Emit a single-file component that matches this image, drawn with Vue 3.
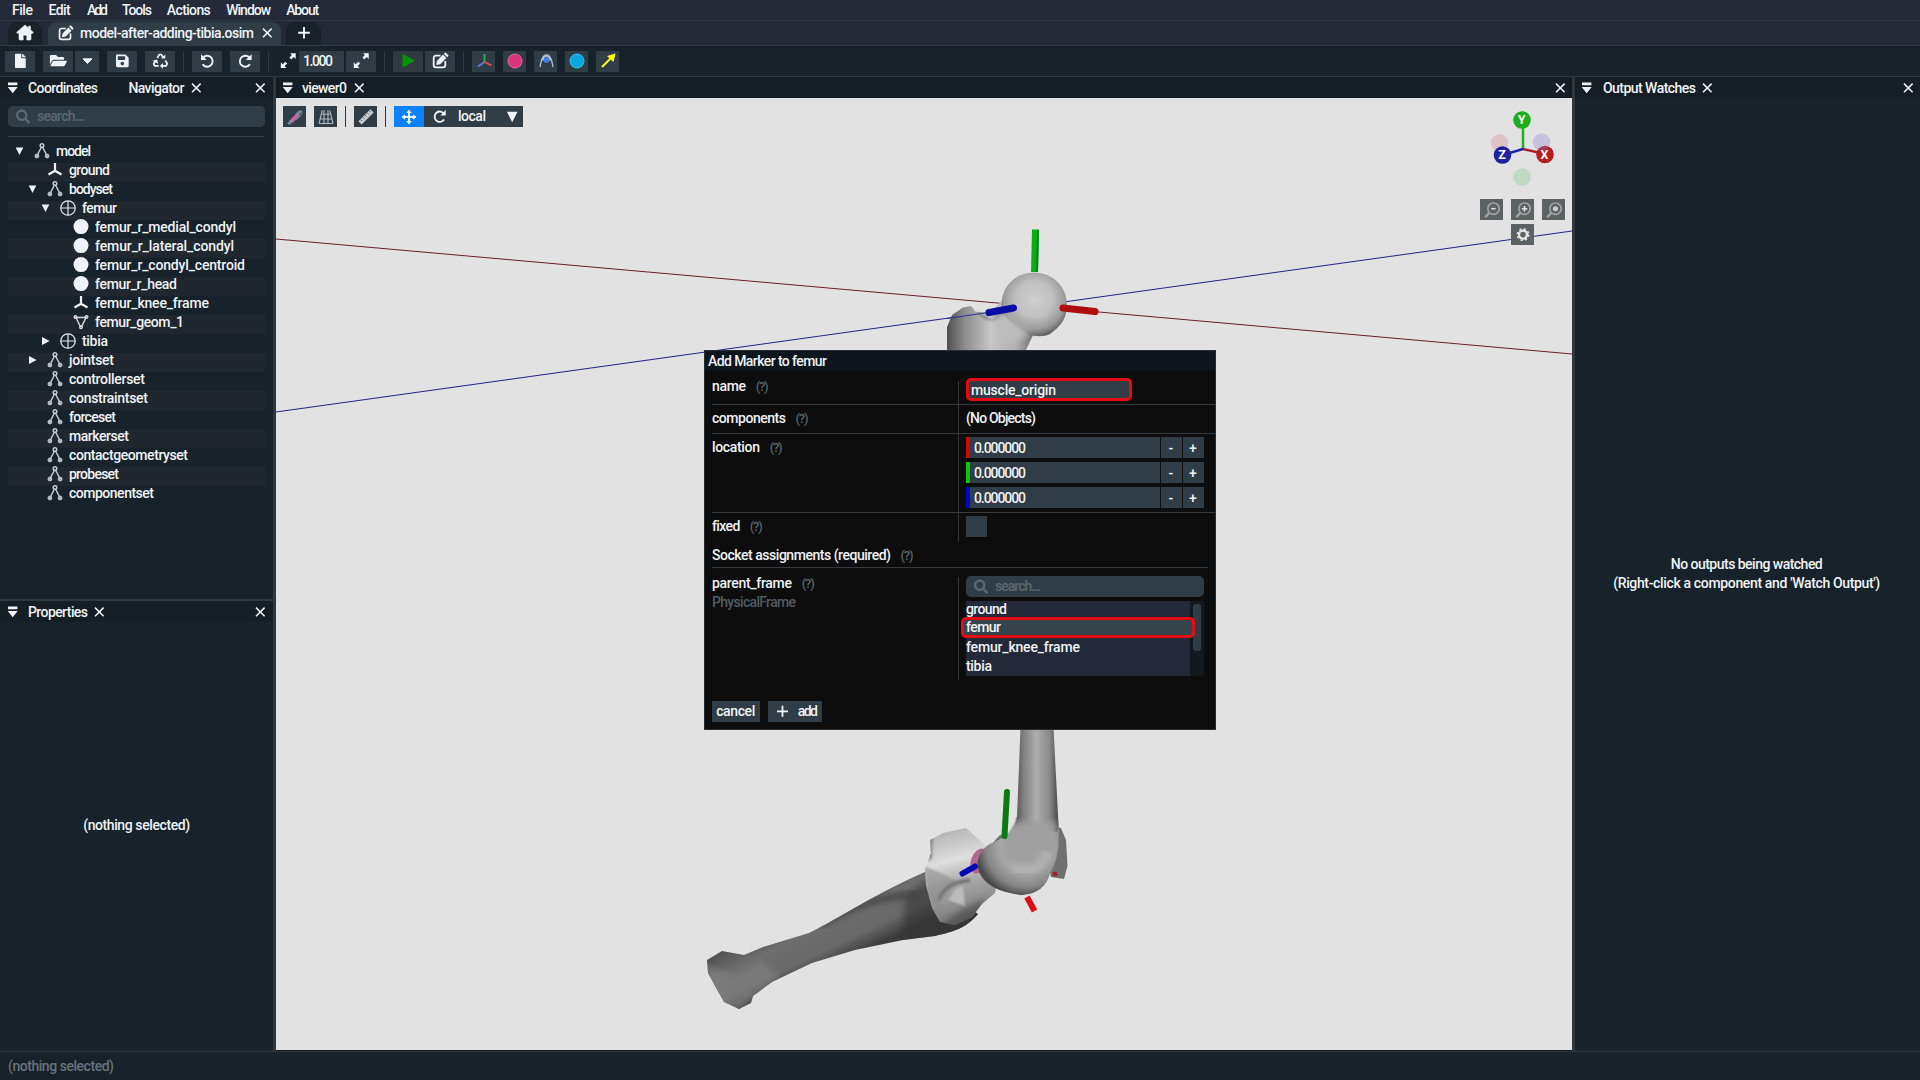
<script setup>
import { h } from 'vue'

// Spreads a label's letters so that it takes exactly the given width.
const vFit = {
  mounted(el, { value }) {
    const range = document.createRange()
    range.selectNodeContents(el)
    const natural = range.getBoundingClientRect().width
    el.style.letterSpacing = (value - natural) / Math.max(1, el.textContent.length - 1) + 'px'
  },
}

const icons = {
  house: '<path d="M9 1 0.6 8.4 1.9 9.6H3V15a1 1 0 0 0 1 1H7.2V11.2h3.6V16H14a1 1 0 0 0 1-1V9.600h1.100L17.400 8.400 14.500 5.800V2.200h-2v1.900Z" stroke="currentColor" stroke-width=".6" stroke-linejoin="round"/>',
  file: '<path transform="translate(4 1.700) scale(.028)" d="M224 136V0H24C10.700 0 0 10.700 0 24v464c0 13.300 10.700 24 24 24h336c13.300 0 24-10.700 24-24V160H248c-13.200 0-24-10.800-24-24zm160-14.100v6.100H256V0h6.100c6.400 0 12.500 2.500 17 7l97.900 98c4.500 4.500 7 10.600 7 16.900z"/>',
  folder: '<path transform="translate(.9 1.100) scale(.0295)" d="M572.694 292.093L500.270 416.248A63.997 63.997 0 0 1 444.989 448H45.025c-18.523 0-30.064-20.093-20.731-36.093l72.424-124.155A64 64 0 0 1 152 256h399.964c18.523 0 30.064 20.093 20.730 36.093zM152 224h328v-48c0-26.510-21.490-48-48-48H272l-64-64H48C21.490 64 0 85.490 0 112v278.046l69.077-118.418C86.214 242.250 117.989 224 152 224z"/>',
  caret: '<path d="M5 6.800h9L9.500 11.500Z" stroke="currentColor" stroke-linejoin="round"/>',
  save: '<path transform="translate(3 1.600) scale(.0283)" fill-rule="evenodd" d="M433.941 129.941l-83.882-83.882A48 48 0 0 0 316.118 32H48C21.490 32 0 53.490 0 80v352c0 26.510 21.490 48 48 48h352c26.510 0 48-21.490 48-48V163.882a48 48 0 0 0-14.059-33.941zM224 416c-35.346 0-64-28.654-64-64 0-35.346 28.654-64 64-64s64 28.654 64 64c0 35.346-28.654 64-64 64zm96-304.520V212c0 6.627-5.373 12-12 12H76c-6.627 0-12-5.373-12-12V108c0-6.627 5.373-12 12-12h228.520c3.183 0 6.235 1.264 8.485 3.515l3.480 3.480A11.996 11.996 0 0 1 320 111.480z"/>',
  recycle: '<g fill="none" stroke="currentColor" stroke-width="1.700"><path d="M6.300 6 8.300 2.500h2l1.900 3"/><path d="m14.300 8.300 1.900 3.300-1.100 2.300h-4"/><path d="M7.700 13.900H3.700l-1-2.100L4.500 8.800"/></g><path d="M10.100 6.500h4.200V2.500ZM12 10.900v5.900L8.900 13.900ZM1.500 8.700l4.600-1.200 1 4.200Z"/>',
  undo: '<path d="M4.500 6.300A5.500 5.500 0 1 1 4.600 12.300" fill="none" stroke="currentColor" stroke-width="1.900"/><path d="M3 2.200v5.700h5.700Z"/>',
  redo: '<path d="M14 6.300A5.500 5.500 0 1 0 13.900 12.300" fill="none" stroke="currentColor" stroke-width="1.900"/><path d="M15.600 2.200v5.700H9.900Z"/>',
  expand: '<path d="M11 1.200h5.700v5.700l-1.900-1.900-2.500 2.500-1.900-1.900L12.900 3.100ZM7.500 16H1.800v-5.700l1.900 1.900 2.500-2.500 1.900 1.900-2.500 2.500Z"/>',
  play: '<path fill="#069306" d="M4 2.500v12.500L15 8.700Z" stroke="#069306" stroke-linejoin="round"/>',
  edit: '<path d="M9.500 3.700H4.700a2 2 0 0 0-2 2v7.600a2 2 0 0 0 2 2h7.600a2 2 0 0 0 2-2V9" fill="none" stroke="currentColor" stroke-width="1.800"/><path d="m12 2.600 3.400 3.400-6.200 6.200-4 .700.700-4Zm.8-.8.900-.9a1 1 0 0 1 1.400 0l2 2a1 1 0 0 1 0 1.400l-.9.900Z"/>',
  frame: '<g fill="none" stroke-width="1.900"><path d="M9.500 2v8" stroke="#39a45a"/><path d="m9.500 10-6.500 4.500" stroke="#4b86d8"/><path d="m9.500 10 7 3.500" stroke="#e14a4a"/></g>',
  pink: '<circle cx="9" cy="9" r="7" fill="#d8347c" stroke="#e06a9a"/>',
  cyan: '<circle cx="9" cy="9" r="7" fill="#08a8dc" stroke="#2fc4ea"/>',
  joint: '<circle cx="9.500" cy="7.800" r="3.300" fill="#3f7be0"/><path d="M6 8.500C6 2.500 13 2.500 13 8.500M3 15c1-3 .8-12 6.500-12S15 12 16 15" fill="none" stroke="#b5bfc8" stroke-width="1.300"/>',
  arrow: '<path d="m3 15 9-9" stroke="#ffff00" stroke-width="2"/><path fill="#ffff00" d="M16.500 1.500 14.500 10 8 4Z"/>',
  close: '<path d="m5 4.600 8.600 8.600m0-8.600L5 13.200" stroke="currentColor" stroke-width="1.500"/>',
  plus: '<path d="M9 3v11.600M3.200 8.800h11.600" stroke="currentColor" stroke-width="1.900"/>',
  menu: '<path d="M4 3.500h9.400v2.800H4ZM3.700 8h10l-5 6.200Z"/>',
  search: '<path transform="translate(2 1.600) scale(.0275)" fill-rule="evenodd" d="M505 442.700L405.300 343c-4.500-4.500-10.600-7-17-7H372c27.600-35.300 44-79.700 44-128C416 93.100 322.900 0 208 0S0 93.100 0 208s93.100 208 208 208c48.300 0 92.700-16.400 128-44v16.300c0 6.400 2.500 12.500 7 17l99.700 99.700c9.400 9.400 24.600 9.400 33.900 0l28.300-28.300c9.400-9.400 9.400-24.600.1-34zM208 336c-70.700 0-128-57.200-128-128 0-70.700 57.200-128 128-128 70.700 0 128 57.200 128 128 0 70.700-57.200 128-128 128z"/>',
  down: '<path d="M4.700 5.500h7.600l-3.800 7.500Z"/>',
  right: '<path d="M5 5v8l7.600-4Z"/>',
  set: '<g fill="none" stroke="#c3cbd2" stroke-width="1.500"><path d="M8.500 5 4.300 13M9.500 5l4.200 8"/><circle cx="9" cy="3.500" r="1.800"/></g><g fill="#aeb7be" stroke="#c3cbd2"><circle cx="3.900" cy="14" r="1.900"/><circle cx="14.100" cy="14" r="1.900"/></g>',
  axes: '<path d="M9 2v8M9 9.700 2.500 13.500M9 9.700l6.500 3.800" fill="none" stroke="currentColor" stroke-width="2.200"/>',
  body: '<path d="M9 1.800v14.400M1.800 9h14.400" stroke="#dfe5ea" stroke-width="1.200"/><circle cx="9" cy="9" r="7.200" fill="none" stroke="#dfe5ea" stroke-width="1.300"/>',
  marker: '<circle cx="9" cy="8.600" r="7.500"/>',
  mesh: '<g fill="none" stroke="#d5dbe0" stroke-width="1.400"><path d="M4 4.500h10L9.700 13.500H8.300Z"/><circle cx="3.500" cy="4" r="1.300"/><circle cx="14.500" cy="4" r="1.300"/><circle cx="9" cy="14.300" r="1.300"/></g>',
  muscle: '<g fill="none" stroke-linecap="round"><path d="m6.300 12.500 5-5" stroke="#c462a4" stroke-width="4"/><path d="m2.500 15.500 3-2.500M11.500 6.500l3-3" stroke="#8c9aa6" stroke-width="1.800"/><path d="M4 12.500c-2 2-1 4.500 1.500 3.200M10.500 11.500 14.500 7.500c2-2 2.500-4.500.3-4.800S11.500 4.500 10 6" stroke="#6e8296" stroke-width="1.100"/></g>',
  grid: '<path d="M7 2v13.500M11 2v13.500M3.600 11h10.800M5 6.300h8M2 15.500h14M5.200 2.500 2 15.500M12.800 2.500 16 15.500" fill="none" stroke="#aeb7be" stroke-width="1.100"/>',
  ruler: '<path d="m3 14.800 12-12" stroke="#c9ced2" stroke-width="4.600"/><path d="m3.600 11.500 1.500 1.500M5.800 9.300l1.500 1.500M8 7.100l1.500 1.500M10.200 4.900l1.500 1.500M12.400 2.700l1.500 1.500" stroke="#4d5a64" stroke-width="1"/>',
  move: '<path d="M9 1.500v15M1.500 9h15" stroke="currentColor" stroke-width="2.200"/><path d="m9 .8 3.200 3.700H5.800ZM9 17.200l3.200-3.700H5.800ZM.8 9l3.700-3.200v6.400ZM17.200 9l-3.700-3.200v6.400Z"/>',
  tri: '<path d="M3.900 3.800h10.600L9.200 14.200Z"/>',
  zoomOut: '<g fill="none" stroke="#a0a4a6" stroke-width="1.700"><circle cx="10.500" cy="7.700" r="5.700"/><path d="m6.300 11.900-4 4.200" stroke-width="2.300"/></g><path d="M8.300 7.700h4.400" stroke="#e2e2e2" stroke-width="1.500"/>',
  zoomIn: '<g fill="none" stroke="#a0a4a6" stroke-width="1.700"><circle cx="10.500" cy="7.700" r="5.700"/><path d="m6.300 11.900-4 4.200" stroke-width="2.300"/></g><path d="M7.700 7.700h5.600M10.500 4.900v5.600" stroke="#e2e2e2" stroke-width="1.600"/>',
  zoomFit: '<g fill="none" stroke="#a0a4a6" stroke-width="1.700"><circle cx="10.500" cy="7.700" r="5.700"/><path d="m6.300 11.900-4 4.200" stroke-width="2.300"/></g><path fill="#c6c8c9" d="m10.500 4.900 2.500 1.400v2.900l-2.500 1.400L8 9.200V6.300Z"/>',
  gear: '<circle cx="9" cy="8.600" r="4" fill="none" stroke="#e6e6e6" stroke-width="2.300"/><circle cx="9" cy="8.600" r="5.600" fill="none" stroke="#e6e6e6" stroke-width="1.700" stroke-dasharray="2.200 2.198"/>',
}

const Icon = (p) =>
  h('svg', {
    viewBox: '0 0 18 18', width: p.s || 18, height: p.s || 18,
    fill: 'currentColor', style: 'display:block;flex:none', innerHTML: icons[p.n],
  })
Icon.props = ['n', 's']

const menus = [['File', 21], ['Edit', 22], ['Add', 21], ['Tools', 30], ['Actions', 44], ['Window', 45], ['About', 33]]

const tree = [
  [0, 'set', 'model', 35, 'down'], [1, 'axes', 'ground', 41], [1, 'set', 'bodyset', 44, 'down'],
  [2, 'body', 'femur', 35, 'down'], [3, 'marker', 'femur_r_medial_condyl', 141],
  [3, 'marker', 'femur_r_lateral_condyl', 139], [3, 'marker', 'femur_r_condyl_centroid', 150],
  [3, 'marker', 'femur_r_head', 82], [3, 'axes', 'femur_knee_frame', 114], [3, 'mesh', 'femur_geom_1', 89],
  [2, 'body', 'tibia', 26, 'right'], [1, 'set', 'jointset', 45, 'right'], [1, 'set', 'controllerset', 76],
  [1, 'set', 'constraintset', 79], [1, 'set', 'forceset', 47], [1, 'set', 'markerset', 60],
  [1, 'set', 'contactgeometryset', 119], [1, 'set', 'probeset', 50], [1, 'set', 'componentset', 85],
]
const axisColors = ['red', 'green', 'blue']
const frames = [['ground', 41], ['femur', 35], ['femur_knee_frame', 114], ['tibia', 26]]
</script>

<template>
  <div class="app">
    <nav class="menubar"><span v-for="m in menus" :key="m[0]" v-fit="m[1]">{{ m[0] }}</span></nav>

    <div class="tabs">
      <div class="tab home"><Icon n="house" /></div>
      <div class="tab file">
        <Icon n="edit" s="17" /><span v-fit="174">model-after-adding-tibia.osim</span><Icon n="close" />
      </div>
      <div class="tab add"><Icon n="plus" /></div>
    </div>

    <div class="toolbar">
      <button class="b w30"><Icon n="file" /></button>
      <button class="b w30 g8"><Icon n="folder" /></button>
      <button class="b w24 g2"><Icon n="caret" /></button>
      <button class="b w30 g8"><Icon n="save" /></button>
      <button class="b w30 g8"><Icon n="recycle" /></button>
      <i class="sep"></i>
      <button class="b w30"><Icon n="undo" /></button>
      <button class="b w30 g8"><Icon n="redo" /></button>
      <i class="sep"></i>
      <span class="scale"><Icon n="expand" /></span>
      <span class="field"><span v-fit="30">1.000</span></span>
      <button class="b w30 g2"><Icon n="expand" /></button>
      <i class="sep"></i>
      <button class="b w30 run"><Icon n="play" /></button>
      <button class="b w30 g2"><Icon n="edit" /></button>
      <i class="sep"></i>
      <button class="b w23"><Icon n="frame" /></button>
      <button class="b w23 g8"><Icon n="pink" /></button>
      <button class="b w23 g8"><Icon n="joint" /></button>
      <button class="b w23 g8"><Icon n="cyan" /></button>
      <button class="b w23 g8"><Icon n="arrow" /></button>
    </div>

    <main class="work">
      <aside class="left">
        <section class="navigator">
          <header class="head">
            <Icon n="menu" /><span class="t1" v-fit="70">Coordinates</span>
            <span class="t2" v-fit="56">Navigator</span><Icon n="close" class="x" /><Icon n="close" class="end" />
          </header>
          <div class="search"><Icon n="search" /><span v-fit="48">search...</span></div>
          <div class="tree">
            <div v-for="r in tree" :key="r[2]" class="row" :style="{ paddingLeft: 3 + r[0] * 13 + 'px' }">
              <span class="twisty"><Icon v-if="r[4]" :n="r[4]" /></span>
              <Icon :n="r[1]" /><span class="lbl" v-fit="r[3]">{{ r[2] }}</span>
            </div>
          </div>
        </section>
        <section class="props">
          <header class="head">
            <Icon n="menu" /><span class="t1" v-fit="60">Properties</span><Icon n="close" class="x" /><Icon n="close" class="end" />
          </header>
          <p class="none"><span v-fit="107">(nothing selected)</span></p>
        </section>
      </aside>

      <section class="viewer">
        <header class="head">
          <Icon n="menu" /><span class="t1" v-fit="45">viewer0</span><Icon n="close" class="x" /><Icon n="close" class="end" />
        </header>
        <div class="scene">
          <svg class="canvas" viewBox="276 98 1296 952" width="1296" height="952">
            <defs>
              <radialGradient id="ball" cx=".5" cy=".42" r=".62">
                <stop offset="0" stop-color="#cfcfcf" /><stop offset=".45" stop-color="#c0c0c0" />
                <stop offset=".75" stop-color="#9c9c9c" /><stop offset="1" stop-color="#4f4f4f" />
              </radialGradient>
              <linearGradient id="troch" x1="0" x2="1">
                <stop offset="0" stop-color="#4e4e4e" /><stop offset=".2" stop-color="#8c8c8c" />
                <stop offset=".5" stop-color="#c6c6c6" /><stop offset=".8" stop-color="#b0b0b0" />
                <stop offset="1" stop-color="#6c6c6c" />
              </linearGradient>
              <linearGradient id="shaft" x1="0" x2="1">
                <stop offset="0" stop-color="#484848" /><stop offset=".22" stop-color="#828282" />
                <stop offset=".5" stop-color="#adadad" /><stop offset=".8" stop-color="#8a8a8a" />
                <stop offset="1" stop-color="#484848" />
              </linearGradient>
              <radialGradient id="condyle" cx=".6" cy=".4" r=".62">
                <stop offset="0" stop-color="#a9a9a9" /><stop offset=".5" stop-color="#a8a8a8" />
                <stop offset=".8" stop-color="#868686" /><stop offset="1" stop-color="#4a4a4a" />
              </radialGradient>
              <linearGradient id="tib" gradientUnits="userSpaceOnUse" x1="820" y1="896" x2="850" y2="958">
                <stop offset="0" stop-color="#484848" /><stop offset=".4" stop-color="#6d6d6d" />
                <stop offset=".75" stop-color="#686868" /><stop offset="1" stop-color="#3c3c3c" />
              </linearGradient>
              <linearGradient id="plateau" x1=".4" y1="0" x2=".6" y2="1">
                <stop offset="0" stop-color="#b0b0b0" /><stop offset=".32" stop-color="#dedede" />
                <stop offset=".55" stop-color="#a6a6a6" /><stop offset="1" stop-color="#6e6e6e" />
              </linearGradient>
              <filter id="soft"><feGaussianBlur stdDeviation="3" /></filter>
              <filter id="fine"><feGaussianBlur stdDeviation="1.300" /></filter>
              <clipPath id="tibClip"><path d="M707 960 722 951 744 955 763 947 809 933C840 918 880 891 925 872L932 850 966 905 978 914C965 929 955 931 935 936L903 940 855 950 812 963 772 982 753 996 751 1003 739 1009 724 1002 715 986 708 973Z" /></clipPath>
              <clipPath id="platClip"><path d="M930 840 943 833 966 828 986 846 1000 870 995 893 982 904 972 917 955 925 940 922 932 908 926 885 925 868 931 856Z" /></clipPath>
              <clipPath id="shaftClip"><path d="M1020 728H1054L1062 900H970L1017 818Z" /></clipPath>
            </defs>
            <path d="M276 239 1572 354" stroke="#6a2026" />
            <path d="M276 412 1572 231" stroke="#23238a" />

            <path fill="url(#troch)" d="M947 352V327L952 315 963 307.500 971 306 976 312 990 312 1005 298 1022 325 1034 333 1025 352Z" />
            <path d="M976 311 992 320 1004 306 1007 313C998 323 985 324 976 311" fill="#666" opacity=".6" filter="url(#fine)" />
            <path fill="url(#ball)" d="M1034 272.500C1053 272.500 1067 287 1067 305 1067 318 1061 326 1050 334 1044 337 1035 337 1028 334 1014 325 1001 318 1001.500 304 1002 287 1014 273 1034 272.500Z" />
            <path d="M1002 312 1030 333 1012 345 992 322Z" fill="#bdbdbd" opacity=".85" filter="url(#soft)" />
            <path d="M947 318.500 988 312.500" stroke="#2c2c96" />
            <path d="M1035.500 229.500 1034.500 272" stroke="#05b016" stroke-width="7" />
            <path d="M1038 230 1037 272" stroke="#078210" stroke-width="2" />
            <path d="M989 312.500 1013.500 308" stroke="#0b0ba8" stroke-width="7" stroke-linecap="round" />
            <path d="M1063 308 1095 311.500" stroke="#b10d10" stroke-width="7" stroke-linecap="round" />

            <g clip-path="url(#tibClip)">
              <path fill="url(#tib)" d="M700 830H990V1020H700Z" />
              <path d="M905 895 903 950 985 935 960 860Z" fill="#333" opacity=".55" filter="url(#soft)" />
              <path d="M700 965 735 975 760 960 780 975 752 1000 735 1015 708 1000Z" fill="#8a8a8a" opacity=".5" filter="url(#soft)" />
              <path d="M820 925C860 902 880 897 920 894" fill="none" stroke="#424242" stroke-width="6" filter="url(#soft)" />
            </g>
            <g clip-path="url(#platClip)">
              <path fill="url(#plateau)" d="M920 825H1005V930H920Z" />
              <g filter="url(#fine)">
                <path d="M924 866 943 874 958 882 943 896 938 910 928 893Z" fill="#8c8c8c" opacity=".6" />
                <path d="M939 900C943 888 953 882 970 880" fill="none" stroke="#777" stroke-width="4" />
                <path d="M957 888 963 886 965 906 948 900Z" fill="#bcbcbc" />
                <path d="M925 833 934 835 932 860 922 860Z" fill="#777" opacity=".6" />
              </g>
              <path d="m962 910 24-12-10 25-24 10-12-8Z" fill="#444" opacity=".65" filter="url(#soft)" />
            </g>
            <ellipse cx="979" cy="861" rx="8" ry="13" transform="rotate(20 979 861)" fill="#b0688c" />
            <path d="M988 848 1000 835 1012 834 1015 850Z" fill="#747474" />
            <path d="M1050 824 1061 828 1066 840 1067.500 866 1064 879 1051 877 1047 860Z" fill="#707070" />
            <path fill="url(#condyle)" d="M1016 817C1012 838 1000 838 988 845 978 853 976 862 979 872 985 886 1000 892 1020 895 1037 895 1047 886 1050 873 1058 860 1060 845 1058 820Z" />
            <path fill="url(#shaft)" d="M1020.500 728H1053.500L1058.500 825 1057 832 1014 830 1017 818Z" />
            <g clip-path="url(#shaftClip)">
              <path d="M1014 822H1056L1055 850 1040 868 1006 860 1000 840Z" fill="#9f9f9f" filter="url(#soft)" />
            </g>
            <path d="M1012 868C1030 876 1040 866 1048 852" fill="none" stroke="#bcbcbc" stroke-width="8" opacity=".7" filter="url(#soft)" />
            <circle cx="1055" cy="874" r="2.500" fill="#a3222c" />
            <path d="M1007 792 1004.500 836" stroke="#0a7a12" stroke-width="6" stroke-linecap="round" />
            <path d="M962.500 873.500 975 866.500" stroke="#0505b4" stroke-width="6" stroke-linecap="round" />
            <path d="M1027 897 1034.500 911" stroke="#dc1010" stroke-width="6" />
          </svg>

          <div class="vtools">
            <button class="b w23"><Icon n="muscle" /></button>
            <button class="b w23 g8"><Icon n="grid" /></button>
            <i class="vsep"></i>
            <button class="b w23"><Icon n="ruler" /></button>
            <i class="vsep"></i>
            <button class="b w30 on"><Icon n="move" s="16" /></button>
            <button class="b w30"><Icon n="redo" s="17" /></button>
            <span class="combo"><span v-fit="28">local</span><Icon n="tri" /></span>
          </div>

          <div class="gizmo">
            <svg width="85" height="90" viewBox="1480 105 85 90">
              <circle cx="1499.500" cy="143" r="8.800" fill="#dcc3c5" />
              <circle cx="1522" cy="177" r="8.800" fill="#c1d9c2" />
              <g fill="none" stroke-width="2.500">
                <path d="M1523 149V120" stroke="#1fae1f" /><path d="M1523 149 1545 154" stroke="#b01c20" />
                <path d="M1523 149 1503 155" stroke="#2323a2" />
              </g>
              <circle cx="1522" cy="120" r="8.800" fill="#1fae1f" /><circle cx="1502.500" cy="155" r="8.800" fill="#2020a0" />
              <circle cx="1545" cy="154.500" r="8.800" fill="#b71c1f" />
              <circle cx="1541.500" cy="142" r="8.800" fill="#8d80d0" opacity=".32" />
              <g class="letters"><text x="1521.500" y="124">Y</text><text x="1502" y="159">Z</text><text x="1544.500" y="158.500">X</text></g>
            </svg>
            <div class="zooms">
              <span><Icon n="zoomOut" /></span><span><Icon n="zoomIn" /></span><span><Icon n="zoomFit" /></span>
              <span><Icon n="gear" /></span>
            </div>
          </div>
        </div>
      </section>

      <aside class="right">
        <header class="head">
          <Icon n="menu" /><span class="t1" v-fit="93">Output Watches</span><Icon n="close" class="x" /><Icon n="close" class="end" />
        </header>
        <div class="empty">
          <span v-fit="152">No outputs being watched</span>
          <span v-fit="267">(Right-click a component and 'Watch Output')</span>
        </div>
      </aside>
    </main>

    <footer class="status"><span v-fit="106">(nothing selected)</span></footer>

    <div class="dialog">
      <h1><span v-fit="119">Add Marker to femur</span></h1>
      <div class="form">
        <div class="line r1">
          <div class="key"><span v-fit="34">name</span><em v-fit="13">(?)</em></div>
          <div class="val"><div class="name"><span v-fit="85">muscle_origin</span></div></div>
        </div>
        <div class="line r2">
          <div class="key"><span v-fit="74">components</span><em v-fit="13">(?)</em></div>
          <div class="val"><span v-fit="70">(No Objects)</span></div>
        </div>
        <div class="line r3">
          <div class="key"><span v-fit="48">location</span><em v-fit="13">(?)</em></div>
          <div class="val">
            <div v-for="c in axisColors" :key="c" class="num">
              <i :class="c"></i><span class="n"><span v-fit="52">0.000000</span></span>
              <span class="pm">-</span><span class="pm">+</span>
            </div>
          </div>
        </div>
        <div class="line r4">
          <div class="key"><span v-fit="28">fixed</span><em v-fit="13">(?)</em></div>
          <div class="val"><div class="check"></div></div>
        </div>
      </div>
      <div class="sockets"><span v-fit="179">Socket assignments (required)</span><em v-fit="13">(?)</em></div>
      <div class="line r5">
        <div class="key two">
          <div><span v-fit="80">parent_frame</span><em v-fit="13">(?)</em></div>
          <div class="dim"><span v-fit="84">PhysicalFrame</span></div>
        </div>
        <div class="val">
          <div class="search"><Icon n="search" /><span v-fit="46">search...</span></div>
          <div class="list">
            <div class="items">
              <div v-for="(f, i) in frames" :key="f[0]" :class="{ picked: i === 1 }"><span v-fit="f[1]">{{ f[0] }}</span></div>
            </div>
            <div class="bar"><i></i></div>
          </div>
        </div>
      </div>
      <div class="actions">
        <button class="b cancel"><span v-fit="39">cancel</span></button>
        <button class="b ok"><Icon n="plus" s="17" /><span v-fit="20">add</span></button>
      </div>
    </div>
  </div>
</template>

<style>
body { overflow: hidden; background: #18222a; }
</style>

<style scoped>
* { box-sizing: border-box; }
.app {
  position: relative; width: 1920px; height: 1080px; display: flex; flex-direction: column;
  font: 500 14px/19px Roboto, "Noto Sans", sans-serif; color: #eff2f7; background: #18222a; white-space: nowrap; cursor: default;
}
.menubar { height: 21px; display: flex; gap: 16px; padding: 1px 12px 0; background: #242a38; border-bottom: 1px solid #303842; }
.menubar span:nth-child(n+3) { position: relative; left: 1px; }
.tabs { height: 25px; display: flex; align-items: flex-end; padding-left: 8px; background: #242a38; border-bottom: 1px solid #333c44; }
.tab { height: 23px; display: flex; align-items: center; justify-content: center; border-radius: 9px 9px 0 0; background: #1a2229; padding-bottom: 1px; }
.home { width: 34px; }
.file { width: 233px; margin-left: 6px; background: #313d46; justify-content: flex-start; padding-left: 9px; }
.file span { width: 174px; margin: 0 4px 0 6px; }
.add { width: 35px; margin-left: 5px; }
.toolbar { height: 31px; display: flex; align-items: center; padding-left: 5px; border-bottom: 1px solid #303940; }
.b {
  height: 21px; padding: 0; border: 0; background: #313d46; color: inherit; font: inherit;
  display: flex; align-items: center; justify-content: center; flex: none;
}
.w30 { width: 30px; } .w24 { width: 24px; } .w23 { width: 23px; }
.g8 { margin-left: 8px; } .g2 { margin-left: 2px; }
.sep { width: 1px; height: 21px; margin: 0 8px; background: #303940; }
.scale { width: 22px; display: flex; justify-content: flex-start; padding-left: 2px; }
.field { width: 45px; height: 21px; padding: 1px 0 0 4px; background: #313d46; }
.run { background: #303a40; }

.work { flex: 1; display: flex; min-height: 0; }
.left { width: 276px; display: flex; flex-direction: column; border-right: 3px solid #30373d; }
.navigator { height: 522px; }
.props { flex: 1; border-top: 2px solid #30383f; display: flex; flex-direction: column; }
.head { height: 21px; display: flex; align-items: center; padding-left: 4px; background: #161e25; flex: none; }
.head span { padding-top: 1px; }
.t1 { margin-left: 6px; }
.t2 { margin-left: 31px; }
.x { margin-left: 3px; }
.end { margin-left: auto; margin-right: 4px; }
.search { height: 21px; display: flex; align-items: center; padding-left: 6px; color: #5b6872; background: #313d46; border-radius: 5px; }
.search span { margin-left: 5px; }
.navigator .search { width: 257px; margin: 8px 0 0 8px; }
.tree { width: 257px; margin: 9px 0 0 8px; padding-top: 7px; border-top: 1px solid #343d45; }
.row { height: 19px; display: flex; align-items: center; padding-bottom: 5px; }
.row:nth-child(even) { background: #20272f; }
.twisty { width: 22px; height: 18px; }
.lbl { margin-left: 5px; padding-top: 1px; }
.none { flex: 1; margin: 0; display: flex; align-items: center; justify-content: center; padding-bottom: 22px; }

.viewer { width: 1296px; display: flex; flex-direction: column; background: #161e25; }
.viewer .head { padding-left: 3px; }
.viewer .t1 { margin-left: 5px; }
.viewer .x { margin-left: 4px; }
.viewer .end { margin-right: 3px; }
.scene { position: relative; flex: 1; background: #e2e2e2; margin-bottom: 1px; }
.canvas { display: block; height: 952px; }
.vtools { position: absolute; left: 7px; top: 8px; display: flex; }
.vsep { width: 1px; margin: 0 8px; background: #30373d; }
.on { background: #0c82fa; }
.combo { width: 69px; height: 21px; background: #313d46; display: flex; justify-content: space-between; align-items: center; padding: 0 2px 0 4px; }
.gizmo { position: absolute; left: 1204px; top: 7px; }
.gizmo svg { display: block; }
.letters { fill: #fff; font: 700 12.500px Roboto, sans-serif; text-anchor: middle; }
.zooms { display: flex; flex-wrap: wrap; width: 85px; justify-content: center; gap: 4px 8px; margin-top: 4px; }
.zooms span { width: 23px; height: 21px; display: flex; align-items: center; justify-content: center; background: #5c6163; }

.right { flex: 1; display: flex; flex-direction: column; border-left: 3px solid #30373d; }
.right .head { padding-left: 3px; }
.right .t1 { margin-left: 7px; }
.right .end { margin-right: 3px; }
.empty { flex: 1; display: flex; flex-direction: column; align-items: center; justify-content: center; padding: 0 2px 2px 0; }
.status { height: 29px; padding: 5px 8px; border-top: 1px solid #30383f; color: #67727b; }

.dialog { position: absolute; left: 704px; top: 350px; width: 512px; height: 380px; background: #0d0d0d; border: 1px solid #272c30; display: flex; flex-direction: column; }
h1 { margin: 0; height: 20px; padding: 1px 0 0 3px; background: #0e151c; font: inherit; }
.form { margin-top: 10px; }
.line { display: flex; margin-left: 7px; }
.r1 { height: 24px; } .r2 { height: 29px; } .r3 { height: 79px; } .r4 { height: 29px; }
.r1, .r2, .r3 { border-bottom: 1px solid #35393c; }
.key { width: 247px; padding-top: 4px; border-right: 1px solid #35393c; }
.r1 .key > * { position: relative; top: -8px; }
em { margin-left: 10px; font-style: normal; font-size: 13px; color: #59646d; }
.val { padding-left: 7px; padding-top: 4px; }
.name { width: 166px; height: 23px; margin-top: -7px; padding: 1px 2px 0; border: 3px solid #e30c12; border-radius: 5px; background: #313d46; line-height: 17px; }
.num { display: flex; height: 21px; margin-bottom: 4px; }
.r3 .val, .r4 .val { padding-top: 3px; }
.num i { width: 4px; } .red { background: #cc0707; } .green { background: #07c80f; } .blue { background: #0505cc; }
.n { width: 190px; padding: 2px 0 0 4px; background: #313d46; }
.pm { width: 21px; margin-left: 1px; padding: 2px 1px 0 0; text-align: center; background: #313d46; }
.check { width: 21px; height: 21px; background: #313d46; }
.sockets { width: 496px; height: 26px; margin-left: 7px; padding-top: 4px; border-bottom: 1px solid #35393c; }
.r5 { height: 103px; margin-top: 9px; }
.r5 .key { padding-top: 0; }
.two div:first-child { margin-top: -3px; }
.dim { color: #505b64; }
.r5 .val { padding-top: 0; margin-top: -1px; }
.r5 .search { width: 238px; }
.list { display: flex; width: 238px; height: 75px; margin-top: 4px; background: #14181f; }
.items { width: 224px; background: #232938; }
.items div { height: 19px; line-height: 16px; }
.items .picked { position: relative; width: 234px; height: 21px; margin: -3px 0 1px -5px; padding-left: 2px; border: 3px solid #e30c12; border-radius: 5px; background: #36454b; line-height: 15px; }
.bar { flex: 1; padding: 3px; }
.bar i { display: block; width: 8px; height: 47px; border-radius: 3px; background: #313d46; }
.actions { display: flex; gap: 8px; margin: 21px 0 0 7px; }
.cancel { width: 48px; padding-right: 1px; }
.ok { width: 54px; gap: 7px; padding-left: 0; }
</style>
